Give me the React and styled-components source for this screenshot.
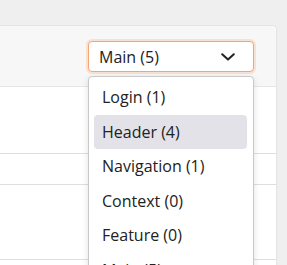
import React from "react";
import styled, { createGlobalStyle } from "styled-components";

const Global = createGlobalStyle`
  html, body { margin: 0; padding: 0; background: #efefef; }
  body { font-family: "Open Sans", "Noto Sans", sans-serif; color: #222; }
`;

const Page = styled.div`
  padding: 25px 10px 0 0;
  height: 265px;
  box-sizing: border-box;
`;

const Card = styled.div`
  position: relative;
  background: #fff;
  border: 1px solid #e4e4e4;
  border-left: none;
  border-bottom: none;
  border-radius: 0 5px 0 0;
  height: 100%;
`;

const Header = styled.div`
  height: 60px;
  background: #f7f7f7;
  border-bottom: 1px solid #e6e6e6;
  border-radius: 0 5px 0 0;
  display: flex;
  align-items: center;
  justify-content: flex-end;
  padding-right: 22px;
`;

const SelectBox = styled.div`
  position: relative;
  width: 166px;
  height: 31px;
  box-sizing: border-box;
  border: 1px solid #f2a674;
  border-radius: 4px;
  background: #fff;
  box-shadow: 0 0 0 2px rgba(246, 170, 120, 0.28);
  display: flex;
  align-items: center;
  justify-content: space-between;
  padding: 0 18px 0 10px;
  font-size: 16px;
  margin-top: 1px;
`;

const Chevron = () => (
  <svg width="14" height="8" viewBox="0 0 14 8" fill="none">
    <path d="M1.2 1.2 L7 6.6 L12.8 1.2" stroke="#222" strokeWidth="2" strokeLinecap="round" strokeLinejoin="round" />
  </svg>
);

const Menu = styled.div`
  position: absolute;
  top: 34px;
  left: -1px;
  width: 166px;
  box-sizing: border-box;
  background: #fff;
  border: 1px solid #c9c9c9;
  border-radius: 4px;
  box-shadow: 0 2px 6px rgba(0, 0, 0, 0.12);
  padding: 3px 6px 6px 5px;
  z-index: 2;
`;

const Item = styled.div`
  height: 34.5px;
  line-height: 34.5px;
  padding-left: 8px;
  border-radius: 4px;
  font-size: 16px;
  color: #222;
  background: ${(p) => (p.$active ? "#e3e2e9" : "transparent")};
  white-space: nowrap;
`;

const Row = styled.div`
  height: ${(p) => p.$h}px;
  border-bottom: 1px solid #dedede;
`;

const items = [
  "Login (1)",
  "Header (4)",
  "Navigation (1)",
  "Context (0)",
  "Feature (0)",
  "Main (5)",
];

export default function App() {
  return (
    <>
      <Global />
      <Page>
        <Card>
          <Header>
            <SelectBox>
              <span>Main (5)</span>
              <Chevron />
              <Menu>
                {items.map((t, i) => (
                  <Item key={t} $active={i === 1}>
                    {t}
                  </Item>
                ))}
              </Menu>
            </SelectBox>
          </Header>
          <Row $h={66} />
          <Row $h={30} />
          <Row $h={74} />
        </Card>
      </Page>
    </>
  );
}
